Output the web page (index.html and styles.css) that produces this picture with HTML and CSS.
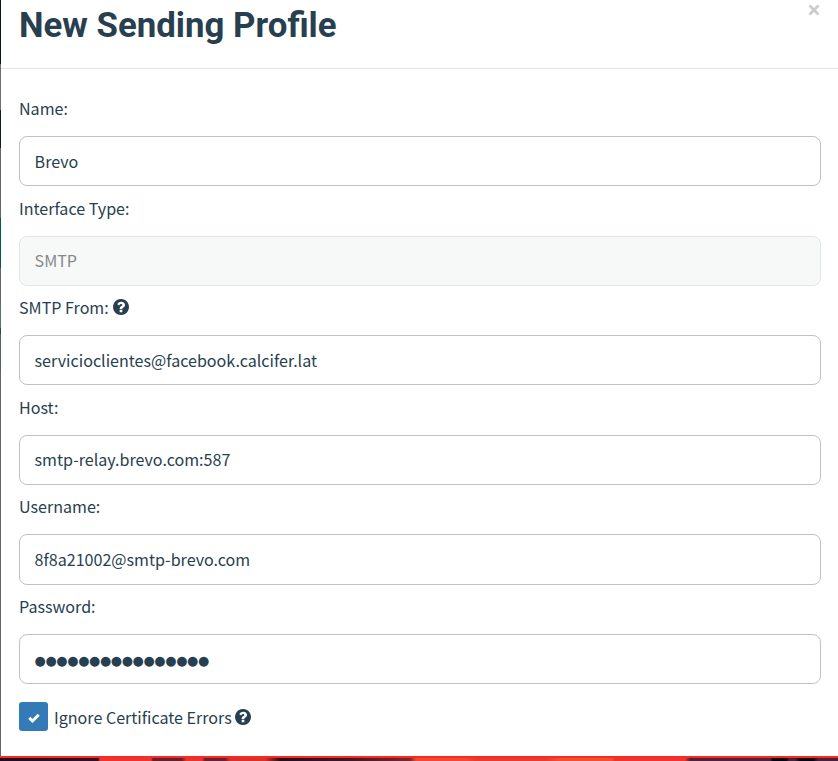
FILE: index.html
```html
<!DOCTYPE html>
<html lang="en">
<head>
<meta charset="utf-8">
<title>New Sending Profile</title>
<link rel="stylesheet" href="styles.css">
</head>
<body>
<svg width="0" height="0" class="defs" aria-hidden="true">
  <symbol id="question" viewBox="0 0 1536 1536">
    <path d="M896 1248v-192q0-14-9-23t-23-9H672q-14 0-23 9t-9 23v192q0 14 9 23t23 9h192q14 0 23-9t9-23zM1152 576q0-88-55.500-163t-138.500-116-170-41q-243 0-371 213-15 24 8 42l132 100q7 6 19 6 16 0 25-12 53-68 86-92 34-24 86-24 48 0 85.500 26t37.500 59q0 38-20 61t-68 45q-63 28-115.500 86.500T640 892v36q0 14 9 23t23 9h192q14 0 23-9t9-23q0-19 21.500-49.500T972 829q32-18 49-28.500t46-35 44.500-48 28-60.500 12.500-81zM1536 768q0 209-103 385.500T1153.500 1433 768 1536t-385.500-103T103 1153.500 0 768t103-385.500T382.500 103 768 0t385.500 103T1433 382.500 1536 768z"/>
  </symbol>
</svg>
<div class="shell">
  <div class="backdrop-side"></div>
  <main class="modal">
    <header class="modal-header">
      <h1>New Sending Profile</h1>
      <button class="close" type="button" aria-label="Close"><svg viewBox="0 0 12 12"><path d="M1.500 1.500 10.500 10.500M10.500 1.500 1.500 10.500"/></svg></button>
    </header>
    <form class="modal-body">
      <label class="label">Name:</label>
      <div class="control">Brevo</div>
      <label class="label">Interface Type:</label>
      <div class="control disabled">SMTP</div>
      <label class="label">SMTP From: <svg class="help"><use href="#question"/></svg></label>
      <div class="control">servicioclientes@facebook.calcifer.lat</div>
      <label class="label">Host:</label>
      <div class="control">smtp-relay.brevo.com:587</div>
      <label class="label">Username:</label>
      <div class="control">8f8a21002@smtp-brevo.com</div>
      <label class="label">Password:</label>
      <div class="control password">●●●●●●●●●●●●●●●●</div>
      <label class="check"><span class="box"><svg viewBox="0 0 12 10"><path d="M1.300 4.900 4.500 8 10.700 1.700"/></svg></span>Ignore Certificate Errors <svg class="help"><use href="#question"/></svg></label>
    </form>
  </main>
</div>
<footer class="backdrop-bottom"></footer>
</body>
</html>
```

FILE: styles.css
```css
* { box-sizing: border-box; }
body {
  margin: 0;
  height: 761px;
  overflow: hidden;
  display: flex;
  flex-direction: column;
  color: #283f50;
  background: #fff;
  font: 16.08px/24px "Noto Sans CJK JP", sans-serif;
}
.defs { position: absolute; }
.shell { display: flex; height: 756px; }
.backdrop-side {
  width: 1px;
  background: linear-gradient(#08131f 0 64px, #6a7070 64px 110px, #141c27 110px 148px, #666 148px 218px, #06584a 218px 268px, #666 268px 300px, #5d6c6e 300px 328px, #274851 328px 334px, #4f6468 334px 372px, #666 372px);
}
.modal { flex: 1; background: #fff; }
.modal-header {
  height: 69px;
  padding: 0 18px 0 18px;
  display: flex;
  justify-content: space-between;
  border-bottom: 1px solid #e5e5e5;
}
h1 {
  margin: 5px 0 0;
  font: 700 34.8px/40px Roboto, sans-serif;
}
.close {
  width: 12px;
  height: 12px;
  margin-top: 4.400px;
  padding: 0;
  border: 0;
  background: none;
}
.close svg { display: block; width: 12px; height: 12px; }
.close path { stroke: #ccc; stroke-width: 2.800; }
.modal-body { padding: 17.700px 17px 0 18px; }
.label {
  display: flex;
  align-items: center;
  gap: 4px;
  height: 49.400px;
  padding-bottom: 6.900px;
}
.help { width: 16px; height: 16px; fill: #283f50; }
.control {
  height: 50.200px;
  padding: 0.600px 14.600px 0;
  border: 1px solid #bdc3c7;
  border-radius: 8px;
  line-height: 47.600px;
}
.disabled { color: #888; background: #f7f9f9; border-color: #e1e5e6; }
.password {
  font-family: "DejaVu Sans", sans-serif;
  font-size: 12.900px;
  letter-spacing: -0.360px;
  line-height: 50px;
}
.check {
  display: flex;
  align-items: center;
  gap: 3.700px;
  margin-top: 18px;
  height: 29px;
}
.box {
  width: 29px;
  height: 29px;
  margin-right: 2.300px;
  display: grid;
  place-items: center;
  border-radius: 3px;
  background: #337ab7;
}
.box svg { width: 12px; height: 10px; margin-top: 3px; margin-left: 1px; }
.box path { fill: none; stroke: #fff; stroke-width: 2.900; }
.backdrop-bottom {
  height: 5px;
  border-top: 2px solid #fb2823;
  background: linear-gradient(90deg, #220b18 0, #35101d 98px, #ec3528 100px 151px, #65202a 153px 182px, #e53529 186px 202px, #6b202a 205px 225px, #d93128 230px 265px, #280d19 280px, #421722 350px, #7d2729 410px, #f44730 416px 468px, #e83b2b 475px 545px, #f1502f 560px 612px, #ed352a 615px 685px, #502233 690px 770px, #080307 773px 786px, #4b2031 789px 795px, #08040a 800px 813px, #4b2031 818px);
}
```
